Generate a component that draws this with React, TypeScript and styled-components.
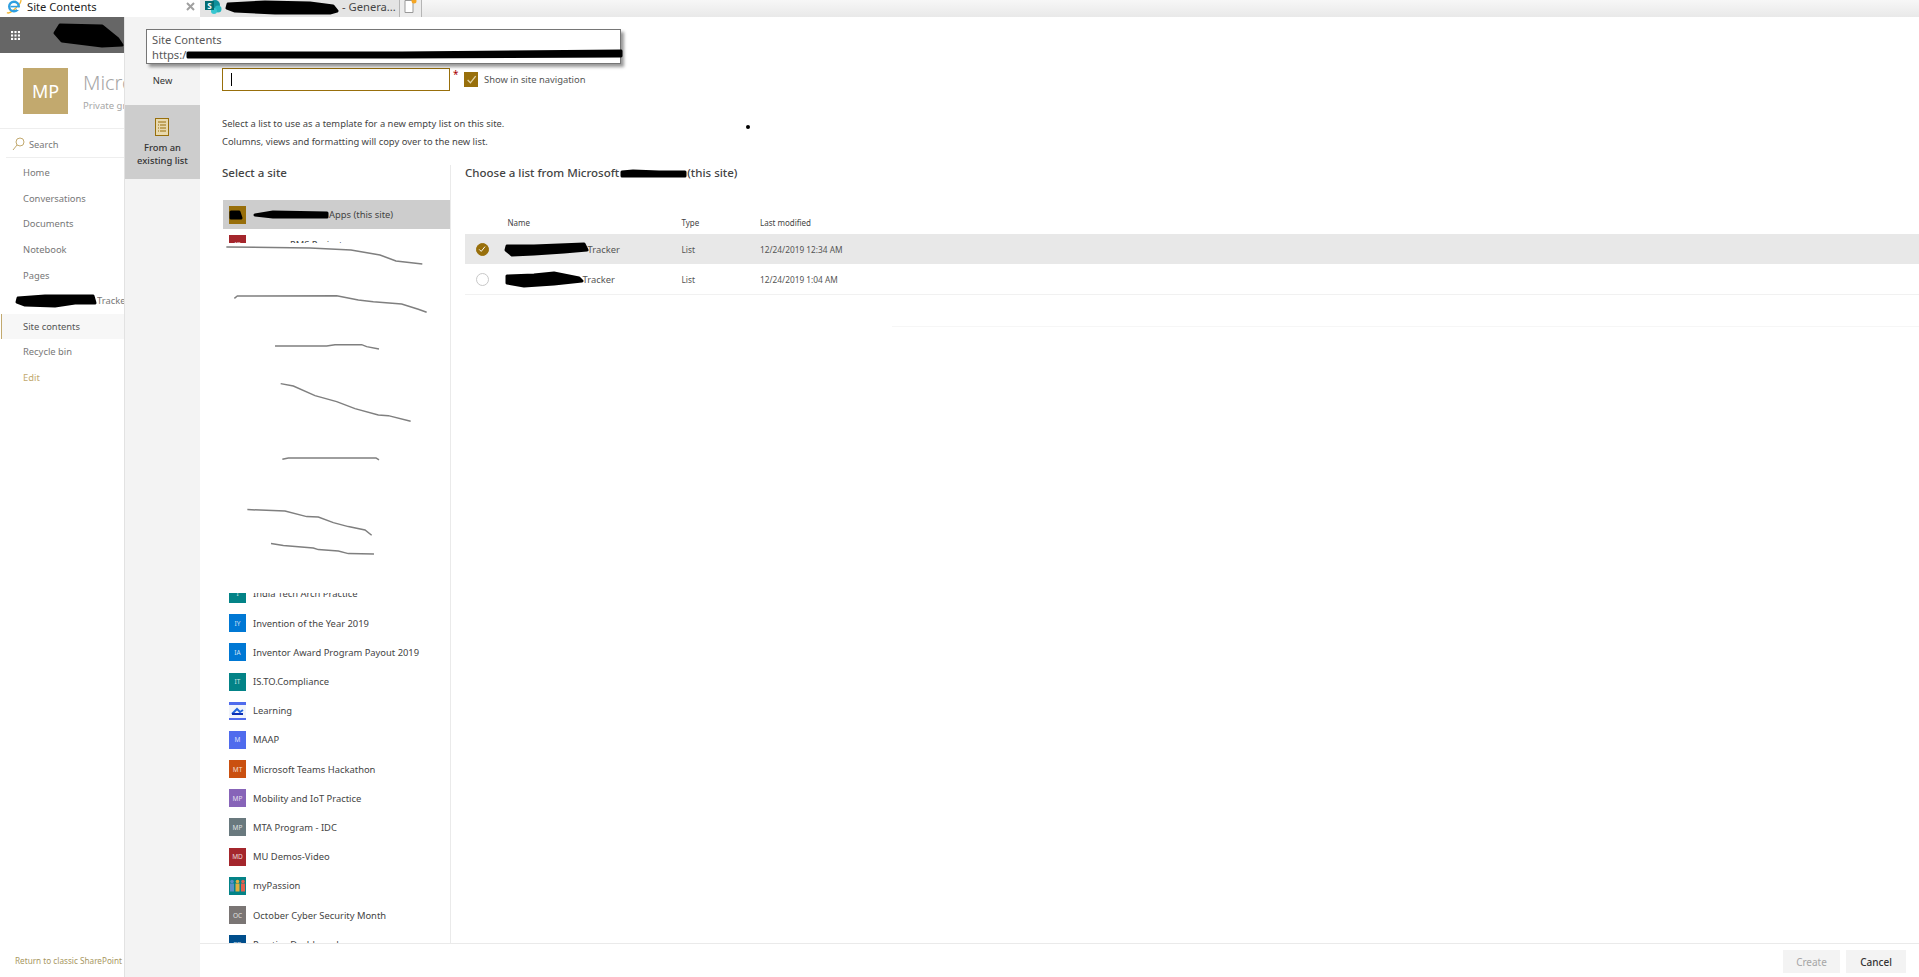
import styled, { createGlobalStyle } from 'styled-components';

const GlobalStyle = createGlobalStyle`
  html, body {
    margin: 0;
    padding: 0;
    height: 100%;
    overflow: hidden;
    background: #fff;
  }
  body {
    font-family: 'Noto Sans', 'Open Sans', sans-serif;
    font-size: 9.4px;
    color: #444;
  }
`;

const gold = '#986f0b';
const themeLight = '#c2a96e';

const Page = styled.div`
  position: relative;
  width: 1919px;
  height: 977px;
  display: flex;
  flex-direction: column;
  overflow: hidden;
`;

/* browser chrome */
const TabBar = styled.div`
  height: 17px;
  flex: none;
  display: flex;
  overflow: hidden;
  background: linear-gradient(#f7f7f7, #e9e9e9);
`;

const ActiveTab = styled.div`
  width: 200px;
  box-sizing: border-box;
  display: flex;
  align-items: flex-start;
  padding: 0 5px 0 6px;
  background: #fff;
  font-size: 11.2px;
  line-height: 13px;
  color: #222;
  gap: 5px;
`;

const TabTitle = styled.span`
  flex: 1;
  white-space: nowrap;
`;

const IeGlyph = styled.svg`
  flex: none;
  margin-top: -2px;
`;

const CloseGlyph = styled.svg`
  flex: none;
  margin-top: 2px;
`;

const Tab = styled.div`
  width: 200px;
  box-sizing: border-box;
  display: flex;
  align-items: flex-start;
  gap: 3px;
  padding-left: 5px;
  background: #e4e4e4;
  border-right: 1px solid #b5b5b5;
  font-size: 11.2px;
  line-height: 13px;
  color: #444;
  white-space: nowrap;
`;

const NewTab = styled.div`
  width: 22px;
  box-sizing: border-box;
  display: flex;
  justify-content: center;
  border-right: 1px solid #b5b5b5;
  background: #ececec;
`;

const Body = styled.div`
  flex: 1;
  display: flex;
  min-height: 0;
`;

/* left navigation */
const Nav = styled.nav`
  width: 125px;
  flex: none;
  display: flex;
  flex-direction: column;
  box-sizing: border-box;
  border-right: 1px solid #e2e2e2;
`;

const SuiteBar = styled.div`
  height: 36px;
  flex: none;
  display: flex;
  align-items: center;
  gap: 32px;
  padding-left: 11px;
  background: #666;
`;

const SiteHeader = styled.div`
  height: 76px;
  flex: none;
  box-sizing: border-box;
  display: flex;
  gap: 15px;
  padding: 15px 0 0 23px;
  border-bottom: 1px solid #eee;
  overflow: hidden;
`;

const SiteLogo = styled.div`
  width: 45px;
  height: 46px;
  flex: none;
  display: flex;
  align-items: center;
  justify-content: center;
  background: ${themeLight};
  color: #fff;
  font-size: 18px;
`;

const SiteMeta = styled.div`
  white-space: nowrap;
`;

const SiteName = styled.div`
  font-size: 20px;
  line-height: 30px;
  font-weight: 300;
  color: #a6a6a6;
`;

const SitePrivacy = styled.div`
  font-size: 9.5px;
  line-height: 14px;
  margin-top: 1px;
  color: #a6a6a6;
`;

const SearchBox = styled.div`
  height: 29px;
  flex: none;
  box-sizing: border-box;
  margin-left: 6px;
  display: flex;
  align-items: center;
  gap: 4px;
  padding: 2px 0 0 6px;
  border-bottom: 1px solid #eee;
  color: #777;
  font-size: 9.3px;
`;

const NavList = styled.div`
  padding-top: 2px;
  flex: 1;
`;

const NavItem = styled.div<{ $active?: boolean; $accent?: boolean }>`
  height: 25.6px;
  display: flex;
  align-items: center;
  box-sizing: border-box;
  white-space: nowrap;
  overflow: hidden;
  font-size: 9.4px;
  padding-left: ${(p) => (p.$active ? '21px' : '23px')};
  margin-left: ${(p) => (p.$active ? '1px' : '0')};
  color: ${(p) => (p.$accent ? themeLight : p.$active ? '#555' : '#777')};
  background: ${(p) => (p.$active ? '#f7f7f7' : 'transparent')};
  border-left: ${(p) => (p.$active ? `1px solid ${themeLight}` : 'none')};
`;

const NavTracker = styled(NavItem)`
  padding-left: 15px;
  overflow: visible;
`;

const ClippedText = styled.span`
  overflow: hidden;
  width: 27px;
  flex: none;
`;

const ReturnLink = styled.div`
  font-size: 8.2px;
  color: #a8975f;
  white-space: nowrap;
  padding: 0 0 11px 15px;
`;

/* list-type panel */
const TypePanel = styled.div`
  width: 75px;
  flex: none;
  display: flex;
  flex-direction: column;
  background: #f3f3f3;
`;

const TypeOption = styled.div<{ $selected?: boolean }>`
  height: ${(p) => (p.$selected ? '74px' : '88px')};
  box-sizing: border-box;
  display: flex;
  flex-direction: column;
  align-items: center;
  justify-content: ${(p) => (p.$selected ? 'flex-start' : 'flex-end')};
  padding: ${(p) => (p.$selected ? '13px 0 0' : '0 0 18px')};
  text-align: center;
  font-size: 9.4px;
  line-height: 13px;
  color: #333;
  background: ${(p) => (p.$selected ? '#cdcdcd' : 'transparent')};
  font-weight: ${(p) => (p.$selected ? 500 : 400)};
`;

const TypeLabel = styled.div`
  margin-top: 5px;
`;

/* main */
const Main = styled.main`
  flex: 1;
  min-width: 0;
  display: flex;
  flex-direction: column;
  background: #fff;
`;

const Content = styled.div`
  flex: 1;
  min-height: 0;
  display: flex;
  flex-direction: column;
  padding: 51px 0 0 22px;
`;

const FormRow = styled.div`
  display: flex;
  align-items: center;
  height: 23px;
  flex: none;
`;

const NameInput = styled.div`
  width: 228px;
  height: 23px;
  box-sizing: border-box;
  border: 1px solid ${gold};
  display: flex;
  align-items: center;
  padding-left: 8px;
`;

const Caret = styled.div`
  width: 1px;
  height: 13px;
  background: #000;
`;

const Required = styled.span`
  color: #a80000;
  font-size: 10px;
  align-self: flex-start;
  margin: -1px 0 0 3px;
  width: 11px;
`;

const CheckBox = styled.span`
  width: 14px;
  height: 15px;
  display: flex;
  align-items: center;
  justify-content: center;
  background: ${gold};
  margin-right: 6px;
`;

const CheckLabel = styled.span`
  font-size: 9.4px;
  color: #555;
`;

const Description = styled.div`
  flex: none;
  margin-top: 24px;
  line-height: 18px;
  font-size: 9.4px;
  color: #444;
  white-space: nowrap;
`;

const Columns = styled.div`
  flex: 1;
  min-height: 0;
  margin-top: 14px;
  display: flex;
`;

const SitesColumn = styled.div`
  width: 229px;
  flex: none;
  box-sizing: border-box;
  display: flex;
  flex-direction: column;
  border-right: 1px solid #eaeaea;
  overflow: hidden;
`;

const ColumnTitle = styled.h2`
  margin: 0;
  flex: none;
  height: 16px;
  line-height: 16px;
  font-size: 11.5px;
  font-weight: 500;
  color: #444;
  white-space: nowrap;
  display: flex;
  align-items: center;
`;

const SiteRows = styled.div`
  margin-top: 19px;
  padding-left: 1px;
  flex: 1;
  min-height: 0;
`;

const SiteRow = styled.div<{ $selected?: boolean }>`
  height: 29.2px;
  display: flex;
  align-items: center;
  gap: 7px;
  padding-left: 6px;
  font-size: 9.4px;
  color: #444;
  white-space: nowrap;
  background: ${(p) => (p.$selected ? '#cdcdcd' : 'transparent')};
`;

const PeekRow = styled(SiteRow)`
  height: 14px;
  align-items: flex-start;
  padding-top: 6px;
  box-sizing: border-box;
  overflow: hidden;
`;

const PeekText = styled.span`
  margin: 3px 0 0 37px;
`;

const ClipTop = styled.div`
  height: 15.8px;
  overflow: hidden;
  display: flex;
  align-items: flex-end;
`;

const Tile = styled.span<{ $bg?: string; $start?: boolean }>`
  width: 17px;
  height: 18px;
  flex: none;
  display: flex;
  align-items: center;
  justify-content: ${(p) => (p.$start ? 'flex-start' : 'center')};
  background: ${(p) => p.$bg || '#888'};
  color: rgba(255, 255, 255, 0.8);
  font-size: 6.5px;
`;

const RedactedName = styled.span`
  display: flex;
  align-items: center;
`;

const Scribbles = styled.svg`
  display: block;
  width: 227px;
  height: 349.6px;
`;

const ListsColumn = styled.div`
  flex: 1;
  min-width: 0;
  padding-left: 14px;
`;

const ListGrid = styled.div`
  margin-top: 31px;
`;

const ListRow = styled.div<{ $selected?: boolean; $header?: boolean; $ruled?: boolean }>`
  display: grid;
  grid-template-columns: 42.5px 174px 78.5px 1fr;
  align-items: center;
  box-sizing: border-box;
  height: ${(p) => (p.$header ? '22px' : p.$ruled ? '31px' : '30px')};
  padding-bottom: ${(p) => (p.$header ? '2px' : '0')};
  font-size: 8.3px;
  color: #555;
  background: ${(p) => (p.$selected ? '#e8e8e8' : 'transparent')};
  border-bottom: ${(p) => (p.$ruled ? '1px solid #f1f1f1' : 'none')};
`;

const HeaderCell = styled.span`
  color: #444;
  font-size: 8px;
`;

const RadioCell = styled.span`
  display: flex;
  justify-content: center;
  padding-right: 1px;
  width: 34px;
`;

const Radio = styled.span<{ $checked?: boolean }>`
  width: 13px;
  height: 13px;
  box-sizing: border-box;
  border-radius: 50%;
  display: flex;
  align-items: center;
  justify-content: center;
  background: ${(p) => (p.$checked ? gold : '#fff')};
  border: 1px solid ${(p) => (p.$checked ? gold : '#c8c8c8')};
`;

const NameCell = styled.span`
  display: flex;
  align-items: center;
  margin-left: -4px;
  font-size: 9.4px;
`;

const FaintRule = styled.div`
  margin: 31px 0 0 427px;
  height: 1px;
  background: #f6f6f6;
`;

const Footer = styled.footer`
  height: 34px;
  flex: none;
  box-sizing: border-box;
  border-top: 1px solid #eaeaea;
  display: flex;
  justify-content: flex-end;
  gap: 6px;
  padding: 6px 13px 0 0;
`;

const FooterButton = styled.button<{ $disabled?: boolean }>`
  width: ${(p) => (p.$disabled ? '57px' : '60px')};
  height: 23px;
  padding: 0;
  border: none;
  background: #f3f3f3;
  font-family: inherit;
  font-size: 10px;
  font-weight: ${(p) => (p.$disabled ? 400 : 500)};
  color: ${(p) => (p.$disabled ? '#a6a6a6' : '#333')};
`;

/* things lying over the page */
const Tooltip = styled.div`
  position: absolute;
  left: 146px;
  top: 29px;
  width: 475px;
  height: 35px;
  box-sizing: border-box;
  padding: 2px 5px;
  background: #fff;
  border: 1px solid #767676;
  box-shadow: 3px 3px 3px rgba(0, 0, 0, 0.4);
  font-size: 11.2px;
  line-height: 15px;
  color: #575757;
  z-index: 5;
`;

const TooltipUrl = styled.div`
  display: flex;
  align-items: center;
`;

const CursorDot = styled.div`
  position: absolute;
  left: 746px;
  top: 125px;
  width: 4px;
  height: 4px;
  border-radius: 50%;
  background: #000;
`;

const Smear = styled.svg`
  display: block;
  flex: none;
  overflow: visible;
`;

function Blot({ w, h, d }: { w: number; h: number; d: string }) {
  return (
    <Smear width={w} height={h} viewBox={`0 0 ${w} ${h}`}>
      <path d={d} fill="#000" stroke="#000" strokeWidth="3" strokeLinejoin="round" />
    </Smear>
  );
}

function IeIcon() {
  return (
    <IeGlyph width="16" height="16" viewBox="0 0 16 16">
      <path d="M1 14.5C2.5 16 7 13 10.500 9.500S15.500 2.500 14.500 1.200C13.500 .2 11 1 9 2" fill="none" stroke="#f2b632" strokeWidth="1.300" />
      <circle cx="8" cy="8.500" r="4.800" fill="none" stroke="#2f9fe0" strokeWidth="2.400" />
      <rect x="4.500" y="7.800" width="7.500" height="1.600" fill="#2f9fe0" />
      <rect x="11" y="9.500" width="3" height="2.500" fill="#fff" />
    </IeGlyph>
  );
}

function SharePointIcon() {
  return (
    <svg width="17" height="14" viewBox="0 0 17 14">
      <circle cx="10" cy="5" r="5" fill="#0f8f9a" />
      <circle cx="13" cy="9" r="3.500" fill="#26b5bd" />
      <circle cx="9" cy="11" r="3" fill="#37c6d0" />
      <rect x="0" y="1" width="9" height="9" fill="#036c70" />
      <text x="4.500" y="8.500" textAnchor="middle" fontSize="8" fontWeight="700" fill="#fff">S</text>
    </svg>
  );
}

function NewTabIcon() {
  return (
    <svg width="14" height="13" viewBox="0 0 14 13">
      <path d="M1 .5H9V12.500H1Z" fill="#fff" stroke="#999" />
      <circle cx="10" cy="1" r="2.500" fill="#f5a623" />
    </svg>
  );
}

function Waffle() {
  const cells = [0, 1, 2];
  return (
    <svg width="11" height="11" viewBox="0 0 11 11">
      {cells.map((y) =>
        cells.map((x) => <rect key={`${x}-${y}`} x={x * 4.2} y={y * 4.2} width="2.600" height="2.600" fill="#fff" />)
      )}
    </svg>
  );
}

function CheckMark({ color, size }: { color: string; size: number }) {
  return (
    <svg width={size} height={size} viewBox="0 0 10 10">
      <path d="M1.500 5.500L4 8L8.800 2" fill="none" stroke={color} strokeWidth="1.200" />
    </svg>
  );
}

function LearningTile() {
  return (
    <svg width="17" height="18" viewBox="0 0 17 18">
      <rect width="17" height="18" fill="#f1f4fb" />
      <rect width="17" height="3" fill="#4f6bed" />
      <rect y="16" width="17" height="2" fill="#4f6bed" />
      <path d="M3 12L8 7L11 10L14 8" stroke="#2266dd" strokeWidth="2" fill="none" />
      <rect x="3" y="11" width="11" height="2" fill="#0b2fb5" />
    </svg>
  );
}

function PassionTile() {
  const people = [
    { x: 1, c: '#5b8fc7' },
    { x: 6.500, c: '#e0b040' },
    { x: 12, c: '#e2604f' }
  ];
  return (
    <svg width="17" height="18" viewBox="0 0 17 18">
      <rect width="17" height="18" fill="#038387" />
      {people.map((p) => (
        <g key={p.x}>
          <circle cx={p.x + 2} cy="4.500" r="1.800" fill={p.c} />
          <rect x={p.x} y="6.500" width="4" height="8" fill={p.c} />
        </g>
      ))}
    </svg>
  );
}

function ListIcon() {
  return (
    <svg width="15" height="18" viewBox="0 0 15 18">
      <rect x=".5" y=".5" width="13" height="17" fill="#e8d9ae" stroke={gold} />
      <path d="M3 4H11M5 7H11M5 10H11M5 13H11" stroke={gold} strokeWidth="1" />
      <path d="M3 7H4M3 10H4M3 13H4" stroke={gold} strokeWidth="1" />
    </svg>
  );
}

const navItems = ['Home', 'Conversations', 'Documents', 'Notebook', 'Pages'];

const sites = [
  { name: 'Invention of the Year 2019', tag: 'IY', bg: '#0078d4' },
  { name: 'Inventor Award Program Payout 2019', tag: 'IA', bg: '#0078d4' },
  { name: 'IS.TO.Compliance', tag: 'IT', bg: '#038387' },
  { name: 'Learning', image: 'learning' },
  { name: 'MAAP', tag: 'M', bg: '#4f6bed' },
  { name: 'Microsoft Teams Hackathon', tag: 'MT', bg: '#ca5010' },
  { name: 'Mobility and IoT Practice', tag: 'MP', bg: '#8764b8' },
  { name: 'MTA Program - IDC', tag: 'MP', bg: '#69797e' },
  { name: 'MU Demos-Video', tag: 'MD', bg: '#a4262c' },
  { name: 'myPassion', image: 'passion' },
  { name: 'October Cyber Security Month', tag: 'OC', bg: '#7a7574' },
  { name: 'Practice Dashboards', tag: 'PD', bg: '#004e8c' }
];

// the hand-drawn lines over the hidden part of the list, in 3x page pixels
const strokes = [
  'M679 -99L930 -96L1053 -90L1140 -75L1188 -57L1267 -48',
  'M703 55L712 48L1010 47L1075 60L1120 65L1205 72L1255 88L1280 97',
  'M825 198L980 198L1005 194L1085 194L1100 200L1137 207',
  'M842 311L880 318L945 347L1010 365L1065 386L1135 405L1165 407L1232 424',
  'M847 538L865 534L1128 534L1137 540',
  'M742 689L855 693L920 710L955 711L1000 728L1045 740L1095 750L1115 766',
  'M813 791L850 797L940 804L955 809L1015 813L1045 821L1122 822'
];

export default function App() {
  return (
    <Page>
      <GlobalStyle />
      <TabBar>
        <ActiveTab>
          <IeIcon />
          <TabTitle>Site Contents</TabTitle>
          <CloseGlyph width="9" height="9" viewBox="0 0 9 9">
            <path d="M1 1L8 8M8 1L1 8" stroke="#a0a0a0" strokeWidth="2" />
          </CloseGlyph>
        </ActiveTab>
        <Tab>
          <SharePointIcon />
          <Blot w={114} h={15} d="M3 4L40 2L85 3L108 6L112 11L105 13L50 13L10 11L2 8Z" />
          <span>- Genera...</span>
        </Tab>
        <NewTab>
          <NewTabIcon />
        </NewTab>
      </TabBar>

      <Body>
        <Nav>
          <SuiteBar>
            <Waffle />
            <Blot w={72} h={28} d="M8 4L50 5L66 18L70 24L50 25L10 20L3 12Z" />
          </SuiteBar>
          <SiteHeader>
            <SiteLogo>MP</SiteLogo>
            <SiteMeta>
              <SiteName>Microsoft</SiteName>
              <SitePrivacy>Private group</SitePrivacy>
            </SiteMeta>
          </SiteHeader>
          <SearchBox>
            <svg width="13" height="14" viewBox="0 0 13 14">
              <circle cx="8" cy="5" r="4" fill="none" stroke={themeLight} />
              <path d="M5 8L1 13" stroke={themeLight} />
            </svg>
            Search
          </SearchBox>
          <NavList>
            {navItems.map((item) => (
              <NavItem key={item}>{item}</NavItem>
            ))}
            <NavTracker>
              <Blot w={82} h={14} d="M3 4L30 2L78 2L80 9L60 9L40 12L10 11L2 8Z" />
              <ClippedText>Tracker</ClippedText>
            </NavTracker>
            <NavItem $active>Site contents</NavItem>
            <NavItem>Recycle bin</NavItem>
            <NavItem $accent>Edit</NavItem>
          </NavList>
          <ReturnLink>Return to classic SharePoint</ReturnLink>
        </Nav>

        <TypePanel>
          <TypeOption>New</TypeOption>
          <TypeOption $selected>
            <ListIcon />
            <TypeLabel>
              From an
              <br />
              existing list
            </TypeLabel>
          </TypeOption>
        </TypePanel>

        <Main>
          <Content>
            <FormRow>
              <NameInput>
                <Caret />
              </NameInput>
              <Required>*</Required>
              <CheckBox>
                <CheckMark color="#e3d5a8" size={11} />
              </CheckBox>
              <CheckLabel>Show in site navigation</CheckLabel>
            </FormRow>
            <Description>
              Select a list to use as a template for a new empty list on this site.
              <br />
              Columns, views and formatting will copy over to the new list.
            </Description>
            <Columns>
              <SitesColumn>
                <ColumnTitle>Select a site</ColumnTitle>
                <SiteRows>
                  <SiteRow $selected>
                    <Tile $bg={gold} $start>
                      <Blot w={14} h={10} d="M2 2L10 2L12 8L2 8Z" />
                    </Tile>
                    <RedactedName>
                      <Blot w={76} h={9} d="M2 5L20 2L74 3L74 7L20 7Z" />
                      Apps (this site)
                    </RedactedName>
                  </SiteRow>
                  <PeekRow>
                    <Tile $bg="#a4262c">IP</Tile>
                    <PeekText>PMS Project</PeekText>
                  </PeekRow>
                  <Scribbles viewBox="669 -111 681 1049">
                    {strokes.map((d) => (
                      <path key={d} d={d} fill="none" stroke="#7f7f7f" strokeWidth="4.500" />
                    ))}
                  </Scribbles>
                  <ClipTop>
                    <SiteRow>
                      <Tile $bg="#038387">I</Tile>
                      India Tech Arch Practice
                    </SiteRow>
                  </ClipTop>
                  {sites.map((site) => (
                    <SiteRow key={site.name}>
                      {site.image === 'learning' ? (
                        <LearningTile />
                      ) : site.image === 'passion' ? (
                        <PassionTile />
                      ) : (
                        <Tile $bg={site.bg}>{site.tag}</Tile>
                      )}
                      {site.name}
                    </SiteRow>
                  ))}
                </SiteRows>
              </SitesColumn>
              <ListsColumn>
                <ColumnTitle>
                  Choose a list from Microsoft
                  <Blot w={68} h={9} d="M3 3L14 2L40 3L66 3L66 7L40 7L3 7Z" />
                  (this site)
                </ColumnTitle>
                <ListGrid>
                  <ListRow $header>
                    <span />
                    <HeaderCell>Name</HeaderCell>
                    <HeaderCell>Type</HeaderCell>
                    <HeaderCell>Last modified</HeaderCell>
                  </ListRow>
                  <ListRow $selected>
                    <RadioCell>
                      <Radio $checked>
                        <CheckMark color="#fff" size={8} />
                      </Radio>
                    </RadioCell>
                    <NameCell>
                      <Blot w={84} h={16} d="M3 5L30 5L80 3L83 9L60 11L30 13L8 14L2 9Z" />
                      Tracker
                    </NameCell>
                    <span>List</span>
                    <span>12/24/2019 12:34 AM</span>
                  </ListRow>
                  <ListRow $ruled>
                    <RadioCell>
                      <Radio />
                    </RadioCell>
                    <NameCell>
                      <Blot w={79} h={17} d="M3 5L30 4L50 2L75 7L78 10L50 13L20 15L3 12Z" />
                      Tracker
                    </NameCell>
                    <span>List</span>
                    <span>12/24/2019 1:04 AM</span>
                  </ListRow>
                </ListGrid>
                <FaintRule />
              </ListsColumn>
            </Columns>
          </Content>
          <Footer>
            <FooterButton $disabled>Create</FooterButton>
            <FooterButton>Cancel</FooterButton>
          </Footer>
        </Main>
      </Body>

      <Tooltip>
        Site Contents
        <TooltipUrl>
          https:/
          <Blot w={436} h={9} d="M2 3L216 3L435 1L435 6L216 7L2 7Z" />
        </TooltipUrl>
      </Tooltip>
      <CursorDot />
    </Page>
  );
}
